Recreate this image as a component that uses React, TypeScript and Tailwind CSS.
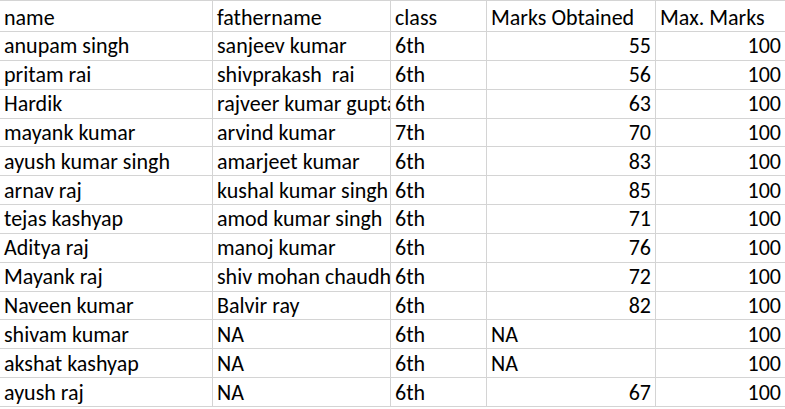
const ROWS = [
  ['anupam singh', 'sanjeev kumar', '6th', '55', '100'],
  ['pritam rai', 'shivprakash  rai', '6th', '56', '100'],
  ['Hardik', 'rajveer kumar gupta', '6th', '63', '100'],
  ['mayank kumar', 'arvind kumar', '7th', '70', '100'],
  ['ayush kumar singh', 'amarjeet kumar', '6th', '83', '100'],
  ['arnav raj', 'kushal kumar singh', '6th', '85', '100'],
  ['tejas kashyap', 'amod kumar singh', '6th', '71', '100'],
  ['Aditya raj', 'manoj kumar', '6th', '76', '100'],
  ['Mayank raj', 'shiv mohan chaudhary', '6th', '72', '100'],
  ['Naveen kumar', 'Balvir ray', '6th', '82', '100'],
  ['shivam kumar', 'NA', '6th', 'NA', '100'],
  ['akshat kashyap', 'NA', '6th', 'NA', '100'],
  ['ayush raj', 'NA', '6th', '67', '100'],
]

const HEADERS = ['name', 'fathername', 'class', 'Marks Obtained', 'Max. Marks']

function Cell({ value, col, header }: { value: string; col: number; header?: boolean }) {
  // numbers sit on the right, like a spreadsheet
  const numeric = /^\d+$/.test(value)
  return (
    <div
      className={`flex items-center overflow-hidden whitespace-pre border-b border-[#d4d4d4] px-[4px] leading-none ${
        col < 4 ? 'border-r' : ''
      } ${header ? 'h-[31px] pt-[3px]' : 'h-[28.85px] pt-[1px]'} ${numeric ? 'justify-end' : 'justify-start'}`}
    >
      {value}
    </div>
  )
}

export default function App() {
  return (
    <div
      className="w-[785px] h-[409px] overflow-hidden bg-white text-black text-[22px]"
      style={{ fontFamily: 'Carlito, "Open Sans", "Liberation Sans", sans-serif' }}
    >
      <div className="grid grid-cols-[213px_178px_96px_169px_129px] border-t border-[#d4d4d4]">
        {HEADERS.map((h, i) => (
          <Cell key={h} value={h} col={i} header />
        ))}
        {ROWS.map((row, r) =>
          row.map((v, c) => <Cell key={`${r}-${c}`} value={v} col={c} />)
        )}
      </div>
    </div>
  )
}
